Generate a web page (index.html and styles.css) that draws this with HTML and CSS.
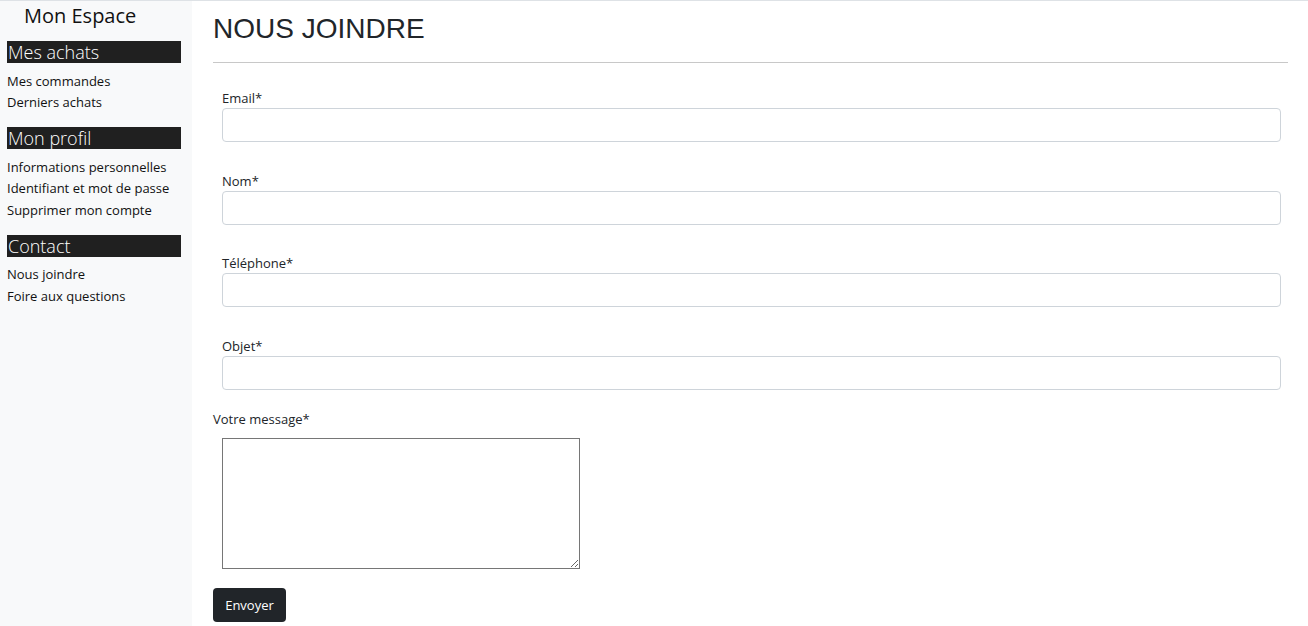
FILE: index.html
```html
<!DOCTYPE html>
<html lang="fr">
<head>
<meta charset="utf-8">
<title>Nous joindre</title>
<link rel="stylesheet" href="styles.css">
</head>
<body>
<div class="page">
  <aside class="sidebar">
    <div class="brand">Mon Espace</div>
    <div class="section-title">Mes achats</div>
    <ul class="menu">
      <li>Mes commandes</li>
      <li>Derniers achats</li>
    </ul>
    <div class="section-title">Mon profil</div>
    <ul class="menu">
      <li>Informations personnelles</li>
      <li>Identifiant et mot de passe</li>
      <li>Supprimer mon compte</li>
    </ul>
    <div class="section-title">Contact</div>
    <ul class="menu">
      <li>Nous joindre</li>
      <li>Foire aux questions</li>
    </ul>
  </aside>
  <main class="main">
    <h1 class="title">NOUS JOINDRE</h1>
    <hr class="rule">
    <form class="form">
      <div class="group">
        <label class="label">Email*</label>
        <input class="input" type="text">
      </div>
      <div class="group">
        <label class="label">Nom*</label>
        <input class="input" type="text">
      </div>
      <div class="group">
        <label class="label">Téléphone*</label>
        <input class="input" type="text">
      </div>
      <div class="group last">
        <label class="label">Objet*</label>
        <input class="input" type="text">
      </div>
      <label class="label msg-label">Votre message*</label>
      <textarea class="message"></textarea>
      <button class="btn" type="button">Envoyer</button>
    </form>
  </main>
</div>
</body>
</html>
```
FILE: styles.css
```css
html, body {
  margin: 0;
  padding: 0;
  background: #fff;
}
body {
  font-family: "Open Sans", "Noto Sans", sans-serif;
  font-size: 13px;
  color: #212529;
}
.page {
  display: flex;
  border-top: 1px solid #dee2e6;
  min-height: 625px;
}
.sidebar {
  width: 192px;
  flex: none;
  background: #f8f9fa;
  padding: 0 11px 0 7px;
  box-sizing: border-box;
}
.brand {
  font-size: 20px;
  line-height: 30px;
  padding-left: 17px;
  color: #111;
  margin-bottom: 10px;
}
.section-title {
  background: #202020;
  color: #fff;
  font-size: 18px;
  font-weight: 300;
  line-height: 22px;
  height: 22px;
  padding-left: 1px;
}
.menu {
  list-style: none;
  margin: 7.5px 0 13.5px;
  padding: 0;
}
.menu li {
  line-height: 21.5px;
  color: #111;
}
.main {
  flex: 1;
  padding: 0 20px 0 21px;
}
.title {
  font-family: "Liberation Sans", Arial, sans-serif;
  font-weight: 400;
  font-size: 28px;
  line-height: 1.2;
  margin: 10.5px 0 0 0;
  color: #212529;
}
.rule {
  border: 0;
  border-top: 1px solid #c8c8c8;
  margin: 17px 0 25px;
}
.form {
  display: flex;
  flex-direction: column;
  align-items: flex-start;
}
.group {
  align-self: stretch;
  margin: 0 7px 28.5px 9px;
  display: flex;
  flex-direction: column;
}
.group.last {
  margin-bottom: 19px;
}
.label {
  line-height: 20px;
  display: block;
}
.input {
  height: 34px;
  box-sizing: border-box;
  border: 1px solid #ced4da;
  border-radius: 4px;
  background: #fff;
  margin: 0;
  font: inherit;
}
.msg-label {
  margin-bottom: 9px;
}
.message {
  width: 358px;
  height: 131px;
  box-sizing: border-box;
  margin: 0 0 19px 9px;
  border: 1px solid #767676;
  font: inherit;
}
.btn {
  background: #212529;
  color: #fff;
  border: 0;
  border-radius: 4px;
  height: 34px;
  width: 73px;
  font: inherit;
  padding: 0;
}
```
